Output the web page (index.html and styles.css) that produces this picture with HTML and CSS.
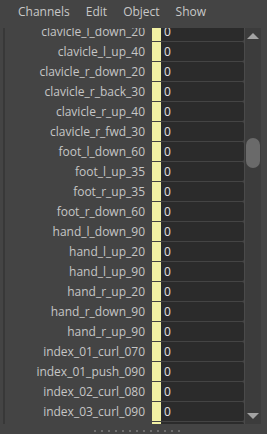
FILE: index.html
```html
<!DOCTYPE html>
<html>
<head>
<meta charset="utf-8">
<link rel="stylesheet" href="styles.css">
</head>
<body>
<div class="panel">
  <div class="menubar">
    <span class="menu">Channels</span>
    <span class="menu">Edit</span>
    <span class="menu">Object</span>
    <span class="menu">Show</span>
  </div>
  <div class="listarea">
    <div class="viewport">
      <div class="rows">
        <div class="row"><span class="lbl">clavicle_l_down_20</span><span class="key"></span><span class="val">0</span></div>
        <div class="row"><span class="lbl">clavicle_l_up_40</span><span class="key"></span><span class="val">0</span></div>
        <div class="row"><span class="lbl">clavicle_r_down_20</span><span class="key"></span><span class="val">0</span></div>
        <div class="row"><span class="lbl">clavicle_r_back_30</span><span class="key"></span><span class="val">0</span></div>
        <div class="row"><span class="lbl">clavicle_r_up_40</span><span class="key"></span><span class="val">0</span></div>
        <div class="row"><span class="lbl">clavicle_r_fwd_30</span><span class="key"></span><span class="val">0</span></div>
        <div class="row"><span class="lbl">foot_l_down_60</span><span class="key"></span><span class="val">0</span></div>
        <div class="row"><span class="lbl">foot_l_up_35</span><span class="key"></span><span class="val">0</span></div>
        <div class="row"><span class="lbl">foot_r_up_35</span><span class="key"></span><span class="val">0</span></div>
        <div class="row"><span class="lbl">foot_r_down_60</span><span class="key"></span><span class="val">0</span></div>
        <div class="row"><span class="lbl">hand_l_down_90</span><span class="key"></span><span class="val">0</span></div>
        <div class="row"><span class="lbl">hand_l_up_20</span><span class="key"></span><span class="val">0</span></div>
        <div class="row"><span class="lbl">hand_l_up_90</span><span class="key"></span><span class="val">0</span></div>
        <div class="row"><span class="lbl">hand_r_up_20</span><span class="key"></span><span class="val">0</span></div>
        <div class="row"><span class="lbl">hand_r_down_90</span><span class="key"></span><span class="val">0</span></div>
        <div class="row"><span class="lbl">hand_r_up_90</span><span class="key"></span><span class="val">0</span></div>
        <div class="row"><span class="lbl">index_01_curl_070</span><span class="key"></span><span class="val">0</span></div>
        <div class="row"><span class="lbl">index_01_push_090</span><span class="key"></span><span class="val">0</span></div>
        <div class="row"><span class="lbl">index_02_curl_080</span><span class="key"></span><span class="val">0</span></div>
        <div class="row"><span class="lbl">index_03_curl_090</span><span class="key"></span><span class="val">0</span></div>
        <div class="row"><span class="lbl"></span><span class="key"></span><span class="val"></span></div>
      </div>
    </div>
    <div class="scrollbar">
      <svg class="arrow up" width="12" height="6" viewBox="0 0 12 6"><polygon points="6,0 12,6 0,6" fill="#a3a3a3"/></svg>
      <div class="thumb"></div>
      <div class="spacer"></div>
      <svg class="arrow down" width="12" height="6" viewBox="0 0 12 6"><polygon points="0,0 12,0 6,6" fill="#a3a3a3"/></svg>
    </div>
  </div>
  <div class="handle">
    <i></i><i></i><i></i><i></i><i></i><i></i><i></i><i></i><i></i><i></i><i></i><i></i><i></i>
  </div>
</div>
</body>
</html>
```

FILE: styles.css
```css
html, body {
  margin: 0;
  padding: 0;
  background: #444444;
}
body {
  width: 267px;
  height: 434px;
  overflow: hidden;
  font-family: "Open Sans", "Noto Sans", sans-serif;
}
.panel {
  display: flex;
  flex-direction: column;
  height: 434px;
}
.menubar {
  height: 28px;
  display: flex;
  align-items: flex-start;
  padding-left: 10px;
  box-sizing: border-box;
}
.menu {
  font-size: 12px;
  line-height: 22px;
  height: 22px;
  margin-top: 1px;
  padding: 0 8px;
  color: #c8c8c8;
}
.listarea {
  display: flex;
  height: 396px;
  margin-left: 3px;
  border-left: 2px solid #383838;
  padding-right: 6px;
}
.viewport {
  flex: 1;
  overflow: hidden;
}
.rows {
  margin-top: -6px;
  display: flex;
  flex-direction: column;
}
.row {
  display: flex;
  height: 19px;
  margin-bottom: 1px;
  font-size: 12px;
  line-height: 19px;
}
.lbl {
  width: 140px;
  padding-right: 7px;
  text-align: right;
  color: #c6c6c6;
  white-space: nowrap;
  overflow: hidden;
}
.key {
  width: 9px;
  background: #f1f0a3;
}
.val {
  flex: 1;
  background: #2b2b2b;
  border-radius: 0 2px 2px 0;
  padding-left: 3px;
  color: #e2e2e2;
}
.scrollbar {
  width: 16px;
  border-left: 1px solid #4a4a4a;
  background: #3c3c3c;
  display: flex;
  flex-direction: column;
  align-items: center;
}
.arrow {
  display: block;
  flex: none;
}
.arrow.up {
  margin-top: 5px;
}
.arrow.down {
  margin-bottom: 5px;
}
.thumb {
  margin-top: 99px;
  width: 14px;
  height: 30px;
  border-radius: 7px;
  background: #6a6a6a;
}
.spacer {
  flex: 1;
}
.handle {
  height: 10px;
  display: flex;
  align-items: flex-start;
  padding-top: 6px;
  padding-left: 94px;
  box-sizing: border-box;
  gap: 5px;
}
.handle i {
  display: block;
  width: 2px;
  height: 2px;
  background: #6e6e6e;
}
```
